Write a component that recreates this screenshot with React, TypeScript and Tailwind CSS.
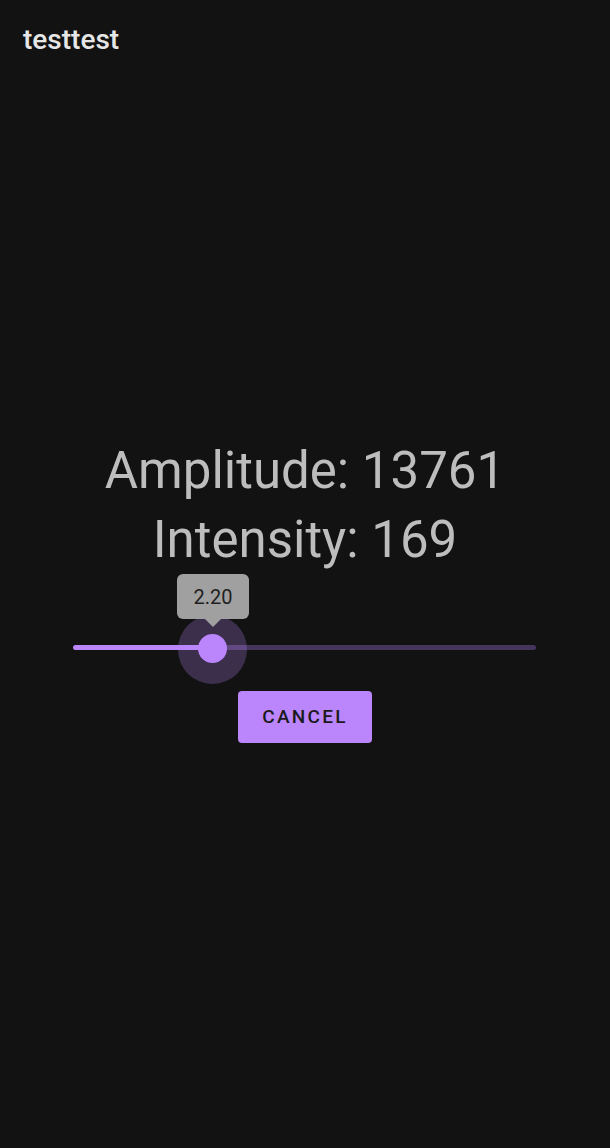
export default function App() {
  return (
    <div className="min-h-[1148px] bg-[#121212] font-['Roboto',sans-serif]">
      <header className="h-[80px] flex items-center pl-[23px]">
        <h1 className="text-[28px] font-medium text-[#e6e6e6]">testtest</h1>
      </header>

      <main className="pt-[356px] flex flex-col items-center">
        <div className="text-center text-[51px] leading-[69px] text-[#bdbdbd]">
          <p>Amplitude: 13761</p>
          <p>Intensity: 169</p>
        </div>

        <div className="relative w-[463px] h-[117px] self-start ml-[73px]">
          <div className="mt-[71px] flex h-[5px] rounded-full overflow-hidden">
            <div className="w-[139px] bg-[#bb86fc]" />
            <div className="flex-1 bg-[#45355c]" />
          </div>

          <div className="absolute left-[105px] top-[41px] w-[69px] h-[69px] rounded-full bg-[#bb86fc]/25" />
          <div className="absolute left-[125px] top-[60px] w-[29px] h-[29px] rounded-full bg-[#bb86fc]" />

          <div className="absolute left-[104px] top-0 flex flex-col items-center">
            <div className="w-[72px] h-[45px] rounded-md bg-[#a0a0a0] flex items-center justify-center text-[20px] text-[#1f1f1f]">
              2.20
            </div>
            <div className="w-0 h-0 border-l-[8px] border-r-[8px] border-t-[8px] border-l-transparent border-r-transparent border-t-[#a0a0a0]" />
          </div>
        </div>

        <button className="w-[134px] h-[52px] rounded bg-[#bb86fc] text-[19px] font-medium tracking-[0.12em] text-[#1a1a1a]">
          CANCEL
        </button>
      </main>
    </div>
  );
}
